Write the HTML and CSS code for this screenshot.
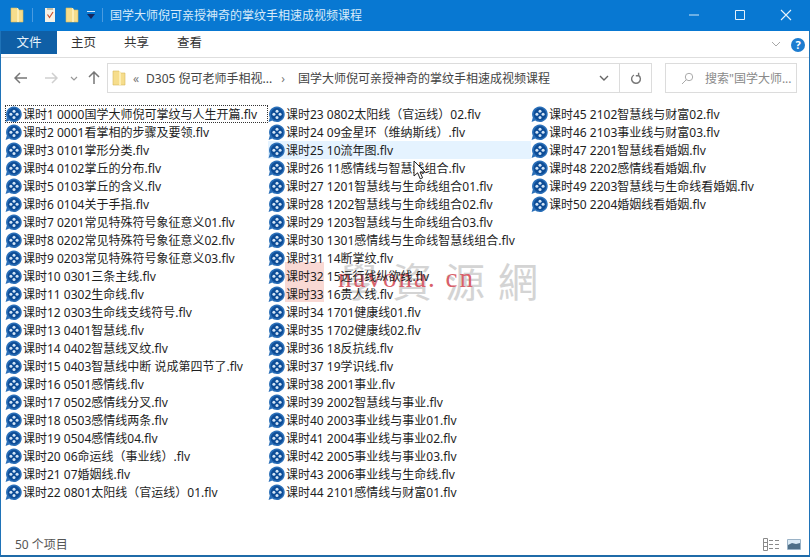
FILE: index.html
```html
<!DOCTYPE html>
<html lang="zh-CN">
<head>
    <meta charset="UTF-8">
    <title>国学大师倪可亲授神奇的掌纹手相速成视频课程</title>
    <link rel="stylesheet" href="styles.css">
</head>
<body>
    <svg class="defs" width="0" height="0">
        <symbol id="flv" viewBox="0 0 17 17">
            <path d="M9 0.6a7.7 7.7 0 1 1-4.7 13.8L0.6 16l1.2-4.4A7.7 7.7 0 0 1 9 0.6z" fill="#2a6fb8"/>
            <circle cx="9" cy="8.3" r="6.2" fill="#0d4c96"/>
            <circle cx="9" cy="5.2" r="1.5" fill="#d5e6f7"/>
            <circle cx="9" cy="11.4" r="1.5" fill="#d5e6f7"/>
            <circle cx="5.9" cy="8.3" r="1.5" fill="#d5e6f7"/>
            <circle cx="12.1" cy="8.3" r="1.5" fill="#d5e6f7"/>
        </symbol>
        <symbol id="folder" viewBox="0 0 14 16">
            <path d="M1 1h6l1 2h5v12H1z" fill="#f6dd8c" stroke="#d9b95c" stroke-width="0.6"/>
            <path d="M7 1h1l1 2v12H7z" fill="#fdeeb5"/>
        </symbol>
    </svg>

    <div class="window">
        <header class="titlebar">
            <svg class="t-icon" width="14" height="16"><use href="#folder"/></svg>
            <span class="t-sep"></span>
            <svg class="t-icon" width="12" height="16" viewBox="0 0 12 16">
                <path d="M1 1h10v14H1z" fill="#f4f1e6"/>
                <path d="M3.5 7.5l2 3 3.5-5.5" fill="none" stroke="#c9502f" stroke-width="1.2"/>
                <path d="M3 1h6v2H3z" fill="#c9c2a8"/>
            </svg>
            <svg class="t-icon t-folder2" width="14" height="16"><use href="#folder"/></svg>
            <svg class="t-icon t-qa" width="8" height="10" viewBox="0 0 8 10">
                <path d="M0 1h8v1H0z" fill="#d9e8f5"/>
                <path d="M0 4h8L4 9z" fill="#16255c"/>
            </svg>
            <span class="t-sep t-sep2"></span>
            <span class="title">国学大师倪可亲授神奇的掌纹手相速成视频课程</span>
            <div class="winbtns">
                <svg width="12" height="12" viewBox="0 0 12 12"><path d="M1 6h10" stroke="#cfe6f7" fill="none"/></svg>
                <svg width="12" height="12" viewBox="0 0 12 12"><path d="M1.5 1.5h9v9h-9z" stroke="#e4f1fb" fill="none"/></svg>
                <svg width="12" height="12" viewBox="0 0 12 12"><path d="M1 1l10 10M11 1L1 11" stroke="#e8f3fb" fill="none" stroke-width="1.1"/></svg>
            </div>
        </header>

        <nav class="tabs">
            <span class="tab tab-file">文件</span>
            <span class="tab">主页</span>
            <span class="tab">共享</span>
            <span class="tab">查看</span>
            <svg class="chev" width="10" height="6" viewBox="0 0 10 6"><path d="M1 1l4 4 4-4" fill="none" stroke="#a8a8a8"/></svg>
            <span class="help">?</span>
        </nav>

        <div class="navbar">
            <svg class="nav-btn" width="14" height="12" viewBox="0 0 14 12"><path d="M6 1L1 6l5 5M1 6h12" fill="none" stroke="#777" stroke-width="1.5"/></svg>
            <svg class="nav-btn nav-fwd" width="14" height="12" viewBox="0 0 14 12"><path d="M8 1l5 5-5 5M13 6H1" fill="none" stroke="#cfcfcf" stroke-width="1.5"/></svg>
            <svg class="nav-btn nav-drop" width="8" height="5" viewBox="0 0 8 5"><path d="M1 1l3 3 3-3" fill="none" stroke="#999" stroke-width="1.2"/></svg>
            <svg class="nav-btn nav-up" width="12" height="14" viewBox="0 0 12 14"><path d="M1 6l5-5 5 5M6 1v12" fill="none" stroke="#777" stroke-width="1.5"/></svg>
            <div class="address">
                <svg class="addr-folder" width="14" height="16"><use href="#folder"/></svg>
                <span class="crumb-more">«</span>
                <span class="crumb">D305 倪可老师手相视...</span>
                <span class="crumb-arrow">›</span>
                <span class="crumb">国学大师倪可亲授神奇的掌纹手相速成视频课程</span>
                <svg class="addr-drop" width="10" height="6" viewBox="0 0 10 6"><path d="M1 1l4 4 4-4" fill="none" stroke="#666" stroke-width="1.4"/></svg>
                <span class="addr-refresh">
                    <svg width="12" height="13" viewBox="0 0 12 13"><path d="M4 3a4.4 4.4 0 1 0 4.5 0.3M8.6 0.8v3H5.8" fill="none" stroke="#777" stroke-width="1.4"/></svg>
                </span>
            </div>
            <div class="search">
                <svg width="13" height="13" viewBox="0 0 13 13"><circle cx="8" cy="5" r="3.7" fill="none" stroke="#aaa"/><path d="M5.3 7.7L1 12" stroke="#aaa" fill="none"/></svg>
                <span>搜索"国学大师...</span>
            </div>
        </div>

        <main class="files">
            <div class="watermark">
                <span class="wm-logo"></span>
                <span class="wm-cn">學資源網</span>
                <span class="wm-url">navona. cn</span>
            </div>

            <div class="file focused"><svg><use href="#flv"/></svg><span>课时1 0000国学大师倪可掌纹与人生开篇.flv</span></div>
            <div class="file"><svg><use href="#flv"/></svg><span>课时2 0001看掌相的步骤及要领.flv</span></div>
            <div class="file"><svg><use href="#flv"/></svg><span>课时3 0101掌形分类.flv</span></div>
            <div class="file"><svg><use href="#flv"/></svg><span>课时4 0102掌丘的分布.flv</span></div>
            <div class="file"><svg><use href="#flv"/></svg><span>课时5 0103掌丘的含义.flv</span></div>
            <div class="file"><svg><use href="#flv"/></svg><span>课时6 0104关于手指.flv</span></div>
            <div class="file"><svg><use href="#flv"/></svg><span>课时7 0201常见特殊符号象征意义01.flv</span></div>
            <div class="file"><svg><use href="#flv"/></svg><span>课时8 0202常见特殊符号象征意义02.flv</span></div>
            <div class="file"><svg><use href="#flv"/></svg><span>课时9 0203常见特殊符号象征意义03.flv</span></div>
            <div class="file"><svg><use href="#flv"/></svg><span>课时10 0301三条主线.flv</span></div>
            <div class="file"><svg><use href="#flv"/></svg><span>课时11 0302生命线.flv</span></div>
            <div class="file"><svg><use href="#flv"/></svg><span>课时12 0303生命线支线符号.flv</span></div>
            <div class="file"><svg><use href="#flv"/></svg><span>课时13 0401智慧线.flv</span></div>
            <div class="file"><svg><use href="#flv"/></svg><span>课时14 0402智慧线叉纹.flv</span></div>
            <div class="file"><svg><use href="#flv"/></svg><span>课时15 0403智慧线中断 说成第四节了.flv</span></div>
            <div class="file"><svg><use href="#flv"/></svg><span>课时16 0501感情线.flv</span></div>
            <div class="file"><svg><use href="#flv"/></svg><span>课时17 0502感情线分叉.flv</span></div>
            <div class="file"><svg><use href="#flv"/></svg><span>课时18 0503感情线两条.flv</span></div>
            <div class="file"><svg><use href="#flv"/></svg><span>课时19 0504感情线04.flv</span></div>
            <div class="file"><svg><use href="#flv"/></svg><span>课时20 06命运线（事业线）.flv</span></div>
            <div class="file"><svg><use href="#flv"/></svg><span>课时21 07婚姻线.flv</span></div>
            <div class="file"><svg><use href="#flv"/></svg><span>课时22 0801太阳线（官运线）01.flv</span></div>

            <div class="file"><svg><use href="#flv"/></svg><span>课时23 0802太阳线（官运线）02.flv</span></div>
            <div class="file"><svg><use href="#flv"/></svg><span>课时24 09金星环（维纳斯线）.flv</span></div>
            <div class="file hovered"><svg><use href="#flv"/></svg><span>课时25 10流年图.flv</span></div>
            <div class="file"><svg><use href="#flv"/></svg><span>课时26 11感情线与智慧线组合.flv</span></div>
            <div class="file"><svg><use href="#flv"/></svg><span>课时27 1201智慧线与生命线组合01.flv</span></div>
            <div class="file"><svg><use href="#flv"/></svg><span>课时28 1202智慧线与生命线组合02.flv</span></div>
            <div class="file"><svg><use href="#flv"/></svg><span>课时29 1203智慧线与生命线组合03.flv</span></div>
            <div class="file"><svg><use href="#flv"/></svg><span>课时30 1301感情线与生命线智慧线组合.flv</span></div>
            <div class="file"><svg><use href="#flv"/></svg><span>课时31 14断掌纹.flv</span></div>
            <div class="file"><svg><use href="#flv"/></svg><span>课时32 15远行线纵欲线.flv</span></div>
            <div class="file"><svg><use href="#flv"/></svg><span>课时33 16贵人线.flv</span></div>
            <div class="file"><svg><use href="#flv"/></svg><span>课时34 1701健康线01.flv</span></div>
            <div class="file"><svg><use href="#flv"/></svg><span>课时35 1702健康线02.flv</span></div>
            <div class="file"><svg><use href="#flv"/></svg><span>课时36 18反抗线.flv</span></div>
            <div class="file"><svg><use href="#flv"/></svg><span>课时37 19学识线.flv</span></div>
            <div class="file"><svg><use href="#flv"/></svg><span>课时38 2001事业.flv</span></div>
            <div class="file"><svg><use href="#flv"/></svg><span>课时39 2002智慧线与事业.flv</span></div>
            <div class="file"><svg><use href="#flv"/></svg><span>课时40 2003事业线与事业01.flv</span></div>
            <div class="file"><svg><use href="#flv"/></svg><span>课时41 2004事业线与事业02.flv</span></div>
            <div class="file"><svg><use href="#flv"/></svg><span>课时42 2005事业线与事业03.flv</span></div>
            <div class="file"><svg><use href="#flv"/></svg><span>课时43 2006事业线与生命线.flv</span></div>
            <div class="file"><svg><use href="#flv"/></svg><span>课时44 2101感情线与财富01.flv</span></div>

            <div class="file"><svg><use href="#flv"/></svg><span>课时45 2102智慧线与财富02.flv</span></div>
            <div class="file"><svg><use href="#flv"/></svg><span>课时46 2103事业线与财富03.flv</span></div>
            <div class="file"><svg><use href="#flv"/></svg><span>课时47 2201智慧线看婚姻.flv</span></div>
            <div class="file"><svg><use href="#flv"/></svg><span>课时48 2202感情线看婚姻.flv</span></div>
            <div class="file"><svg><use href="#flv"/></svg><span>课时49 2203智慧线与生命线看婚姻.flv</span></div>
            <div class="file"><svg><use href="#flv"/></svg><span>课时50 2204婚姻线看婚姻.flv</span></div>

            <svg class="cursor" width="14" height="20" viewBox="0 0 14 20">
                <path d="M1 1v15l3.6-3.2 2.6 6 2.4-1-2.6-5.8H12z" fill="#fff" stroke="#222" stroke-width="1"/>
            </svg>
        </main>

        <footer class="status">
            <span class="count">50 个项目</span>
            <div class="views">
                <svg width="17" height="13" viewBox="0 0 17 13">
                    <path d="M0.5 0.5h4v12h-4zM0.5 4.5h4M0.5 8.5h4" fill="#fff" stroke="#8a8a8a"/>
                    <path d="M6 2.5h4M12 2.5h4M6 6.5h4M12 6.5h4M6 10.5h4M12 10.5h4" stroke="#8a8a8a"/>
                </svg>
                <svg class="view-thumb" width="14" height="11" viewBox="0 0 14 11">
                    <path d="M0.5 0.5h13v10h-13z" fill="#dcebf6" stroke="#9ab2c6"/>
                    <path d="M1 6l4-2 4 1 4-1v6H1z" fill="#4f6f88"/>
                </svg>
            </div>
        </footer>
    </div>
</body>
</html>
```

FILE: styles.css
```css
html, body {
    margin: 0;
    height: 100%;
}

body {
    font-family: "Noto Sans", "Noto Sans CJK SC", sans-serif;
    font-size: 12px;
    color: #1e1e1e;
    background-color: #fff;
    overflow: hidden;
}

.defs {
    position: absolute;
}

.window {
    height: 555px;
    display: flex;
    flex-direction: column;
    border-left: 1px solid #1f73b8;
    border-right: 1px solid #1f73b8;
    border-bottom: 2px solid #1f6ba8;
}

/* title bar */
.titlebar {
    height: 31px;
    flex: none;
    display: flex;
    align-items: center;
    box-sizing: border-box;
    padding: 0 0 1px 10px;
    background-color: #0878d2;
    margin: 0 -1px;
}

.t-icon {
    flex: none;
}

.t-sep {
    width: 1px;
    height: 14px;
    margin: 0 11px 0 8px;
    background-color: #4a9be0;
}

.t-folder2 {
    margin-left: 9px;
}

.t-qa {
    margin-left: 8px;
}

.t-sep2 {
    margin: 0 7px 0 7px;
}

.title {
    font-size: 12px;
    color: #d7ebfa;
}

.winbtns {
    margin-left: auto;
    display: flex;
    gap: 34px;
    padding-right: 18px;
}

/* ribbon tabs */
.tabs {
    height: 26px;
    flex: none;
    display: flex;
    align-items: flex-start;
    border-bottom: 1px solid #dedede;
    font-size: 12.5px;
    color: #333;
}

.tab {
    width: 53px;
    height: 23px;
    line-height: 24px;
    text-align: center;
}

.tab-file {
    width: 56px;
    color: #e8f2fa;
    background-color: #0f5fa6;
}

.chev {
    margin: 10px 0 0 auto;
}

.help {
    width: 14px;
    height: 14px;
    margin: 7px 4px 0 10px;
    border-radius: 50%;
    background-color: #1c7cd0;
    color: #fff;
    font-size: 11px;
    font-weight: bold;
    line-height: 14px;
    text-align: center;
}

/* address row */
.navbar {
    height: 47px;
    flex: none;
    display: flex;
    align-items: center;
    box-sizing: border-box;
    padding: 5px 12px 12px 13px;
    color: #444;
}

.nav-fwd {
    margin-left: 16px;
}

.nav-drop {
    margin-left: 12px;
}

.nav-up {
    margin-left: 10px;
}

.address {
    width: 545px;
    height: 30px;
    margin-left: 7px;
    flex: none;
    display: flex;
    align-items: center;
    padding-left: 4px;
    border: 1px solid #dcdcdc;
    box-sizing: border-box;
}

.addr-folder {
    flex: none;
}

.crumb-more {
    margin: 0 7px;
    color: #777;
}

.crumb-arrow {
    margin: 0 13px 0 9px;
    color: #777;
}

.addr-drop {
    margin-left: auto;
}

.addr-refresh {
    width: 31px;
    height: 100%;
    margin-left: 10px;
    display: flex;
    align-items: center;
    justify-content: center;
    border-left: 1px solid #dcdcdc;
}

.search {
    width: 132px;
    height: 30px;
    margin-left: 13px;
    flex: none;
    display: flex;
    align-items: center;
    gap: 11px;
    padding-left: 15px;
    border: 1px solid #dcdcdc;
    box-sizing: border-box;
    color: #8a8a8a;
    white-space: nowrap;
}

/* file list */
.files {
    position: relative;
    flex: 1;
    display: grid;
    grid-auto-flow: column;
    grid-template-rows: repeat(22, 18px);
    grid-auto-columns: 263px;
    align-content: start;
    padding-left: 4px;
}

.file {
    position: relative;
    display: flex;
    align-items: center;
    gap: 1px;
    box-sizing: border-box;
    white-space: nowrap;
}

.file svg {
    width: 17px;
    height: 17px;
    flex: none;
}

.focused {
    width: 263px;
    outline: 1px dotted #333;
    outline-offset: -1px;
}

.hovered {
    background-color: #e5f3ff;
}

/* site watermark baked into the screenshot */
.watermark {
    position: absolute;
    left: 284px;
    top: 153px;
    width: 260px;
    height: 46px;
    pointer-events: none;
}

.wm-logo {
    position: absolute;
    left: 0;
    top: 4px;
    width: 39px;
    height: 40px;
    background-color: #f9d9d4;
}

.wm-cn {
    position: absolute;
    left: 54px;
    top: -7px;
    font-family: "Noto Sans CJK TC", sans-serif;
    font-size: 40px;
    letter-spacing: 13px;
    white-space: nowrap;
    color: #d4d4d4;
}

.wm-url {
    position: absolute;
    left: 53px;
    top: 5px;
    font-family: "Liberation Serif", serif;
    font-size: 27px;
    letter-spacing: 2px;
    white-space: nowrap;
    color: #d8606a;
}

.cursor {
    position: absolute;
    left: 412px;
    top: 55px;
}

/* status bar */
.status {
    height: 24px;
    flex: none;
    display: flex;
    align-items: center;
    justify-content: space-between;
    box-sizing: border-box;
    padding-top: 2px;
    color: #555;
}

.count {
    padding-left: 14px;
}

.views {
    display: flex;
    align-items: center;
    gap: 7px;
    padding-right: 8px;
}
```
